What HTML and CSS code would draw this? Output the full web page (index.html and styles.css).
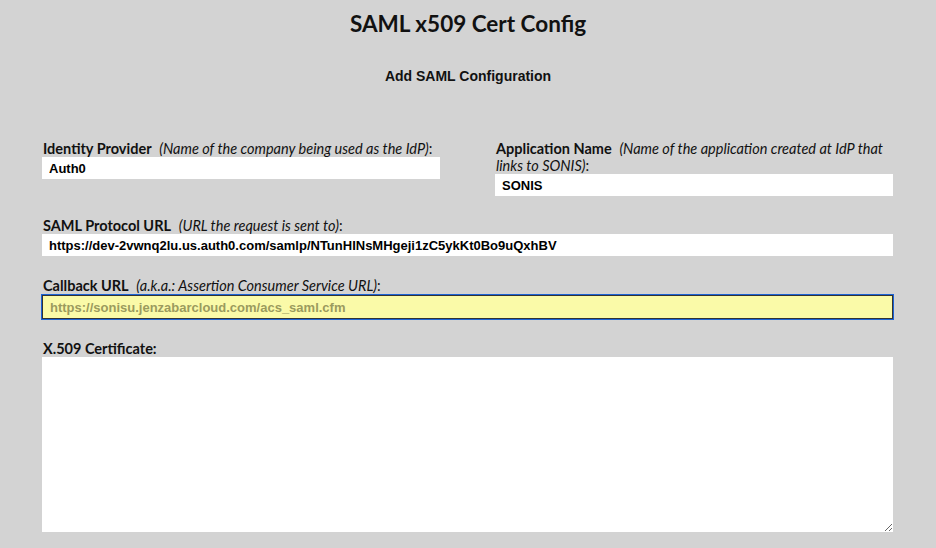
FILE: index.html
```html
<!DOCTYPE html>
<html lang="en">
<head>
  <meta charset="UTF-8">
  <title>SAML x509 Cert Config</title>
  <link rel="stylesheet" href="styles.css">
</head>
<body>
  <h1 class="page-title">SAML x509 Cert Config</h1>
  <h2 class="section-title">Add SAML Configuration</h2>

  <form class="saml-form">
    <div class="row two-col">
      <div class="field">
        <label for="idp"><b>Identity Provider</b> <i>(Name of the company being used as the IdP)</i>:</label>
        <input id="idp" type="text" value="Auth0">
      </div>
      <div class="field">
        <label for="appName"><b>Application Name</b> <i>(Name of the application created at IdP that links to SONIS)</i>:</label>
        <input id="appName" type="text" value="SONIS">
      </div>
    </div>

    <div class="field">
      <label for="protoUrl"><b>SAML Protocol URL</b> <i>(URL the request is sent to)</i>:</label>
      <input id="protoUrl" type="text" value="https://dev-2vwnq2lu.us.auth0.com/samlp/NTunHINsMHgeji1zC5ykKt0Bo9uQxhBV">
    </div>

    <div class="field">
      <label for="callback"><b>Callback URL</b> <i>(a.k.a.: Assertion Consumer Service URL)</i>:</label>
      <input id="callback" class="readonly focused" type="text" value="https://sonisu.jenzabarcloud.com/acs_saml.cfm" readonly>
    </div>

    <div class="field">
      <label for="cert"><b class="plain">X.509 Certificate:</b></label>
      <textarea id="cert"></textarea>
    </div>
  </form>
</body>
</html>
```

FILE: styles.css
```css
:root {
  --page-bg: #d3d3d3;
  --text: #111111;
  --field-bg: #ffffff;
  --readonly-bg: #fafaa8;
  --readonly-text: #9b9b5e;
  --focus: #1b63d6;
}
* { box-sizing: border-box; }
body {
  margin: 0;
  background: var(--page-bg);
  color: var(--text);
  font-family: Lato, "Open Sans", sans-serif;
}
.page-title {
  margin: 11px 0 0;
  text-align: center;
  font-size: 22.5px;
  font-weight: 700;
  line-height: 26px;
}
.section-title {
  margin: 31px 0 0;
  text-align: center;
  font-family: "Liberation Sans", Arial, sans-serif;
  font-size: 14px;
  font-weight: 700;
  line-height: 16px;
}
.saml-form {
  padding: 56px 43px 0 42px;
  display: flex;
  flex-direction: column;
  gap: 21px;
}
.two-col {
  display: grid;
  grid-template-columns: 1fr 1fr;
  gap: 55px;
  align-items: start;
}
.field { display: flex; flex-direction: column; }
.field label {
  font-size: 14.5px;
  line-height: 17px;
  padding-left: 1px;
}
.field label b { font-weight: 700; margin-right: 4px; }
.field label b.plain { margin-right: 0; }
.field label i { font-style: italic; }
.field input {
  height: 22px;
  border: none;
  background: var(--field-bg);
  padding: 0 7px;
  font-family: "Liberation Sans", Arial, sans-serif;
  font-size: 13px;
  font-weight: 700;
  color: #000;
}
.field input.readonly {
  margin-top: 1px;
  height: 24px;
  background: var(--readonly-bg);
  color: var(--readonly-text);
  border: 1px solid #333;
  padding: 0 7px;
}
.field input.focused { outline: 1px solid var(--focus); }
.field textarea {
  height: 175px;
  border: none;
  background: var(--field-bg);
  resize: vertical;
}
```
